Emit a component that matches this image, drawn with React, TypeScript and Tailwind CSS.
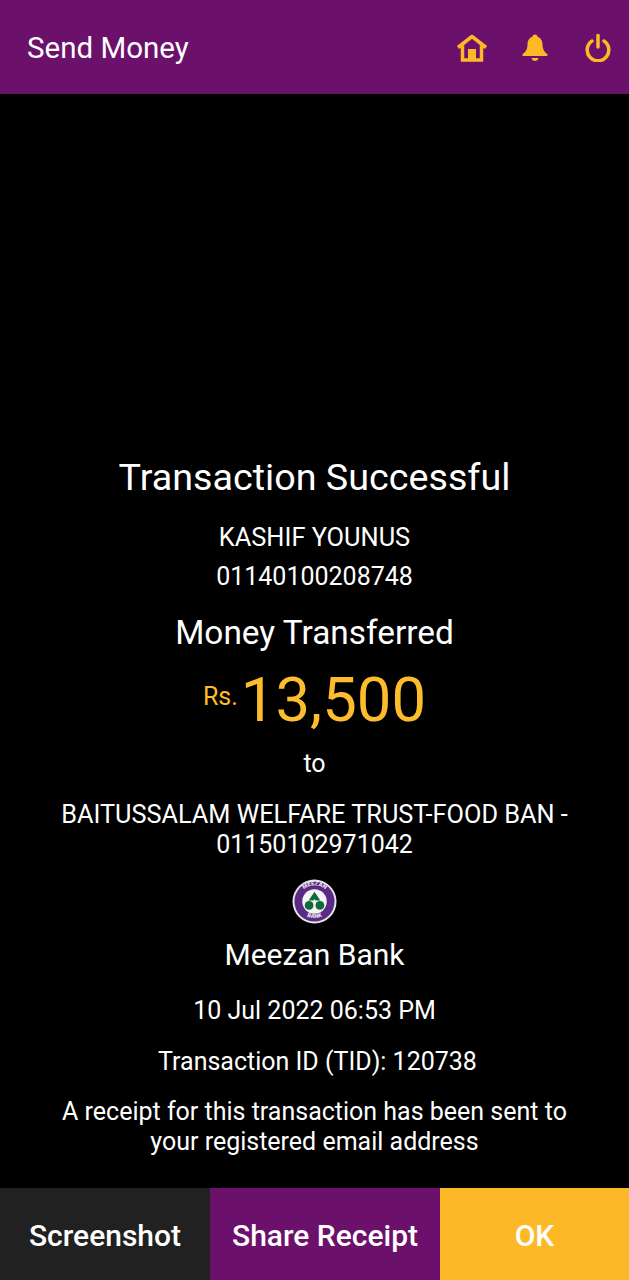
import React from "react";

function HomeIcon() {
  return (
    <svg width="32" height="28" viewBox="0 0 32 28" fill="none" stroke="#FDB827" strokeWidth="3.5">
      <path d="M2 13.500 16 2.500l14 11" strokeLinejoin="round" />
      <path d="M6.500 11.500V26H25.500V11.500" />
      <path d="M12 26V15H20V26z" fill="#FDB827" stroke="none" />
    </svg>
  );
}

function BellIcon() {
  return (
    <svg width="26" height="28" viewBox="0 0 26 28" fill="#FDB827">
      <circle cx="13" cy="3" r="2.600" />
      <path d="M13 2.500c-5 0-7.500 3.400-7.500 8 0 4.500-1.500 7-4.700 9.600-.8.700-.5 2 .7 2h23c1.200 0 1.500-1.300.7-2-3.200-2.600-4.700-5.100-4.700-9.600 0-4.600-2.500-8-7.500-8z" />
      <path d="M9.500 24h7c-.5 1.900-1.800 3-3.500 3s-3-1.100-3.500-3z" />
    </svg>
  );
}

function PowerIcon() {
  return (
    <svg width="26" height="28" viewBox="0 0 26 28" fill="none" stroke="#FDB827" strokeWidth="3.5" strokeLinecap="round">
      <path d="M13 1.500V13" />
      <path d="M7 7a10.800 10.800 0 1 0 12 0" />
    </svg>
  );
}

function MeezanLogo() {
  return (
    <svg width="45" height="45" viewBox="0 0 46 46">
      <circle cx="23" cy="23" r="22.500" fill="#e8e6ec" />
      <circle cx="23" cy="23" r="20.500" fill="#5b2a86" />
      <circle cx="23" cy="23" r="12.500" fill="#f4f4f4" />
      <path d="M23 13 29 22h-12z" fill="#0f6b3c" />
      <circle cx="17.500" cy="27" r="4.500" fill="#0f6b3c" />
      <circle cx="28.500" cy="27" r="4.500" fill="#0f6b3c" />
      <path d="M23 21v10" stroke="#f4f4f4" strokeWidth="1.500" />
      <defs>
        <path id="meezanTop" d="M6.500 23a16.500 16.500 0 0 1 33 0" />
        <path id="meezanBottom" d="M9 33a17.500 17.500 0 0 0 28 0" />
      </defs>
      <text fill="#f4f4f4" fontSize="6" fontWeight="700" fontFamily="Roboto, sans-serif">
        <textPath href="#meezanTop" startOffset="50%" textAnchor="middle">MEEZAN</textPath>
      </text>
      <text fill="#f4f4f4" fontSize="6" fontWeight="700" fontFamily="Roboto, sans-serif">
        <textPath href="#meezanBottom" startOffset="50%" textAnchor="middle">BANK</textPath>
      </text>
    </svg>
  );
}

export default function App() {
  return (
    <div className="h-[1280px] w-full flex flex-col bg-black text-white font-['Roboto',sans-serif] overflow-hidden">
      <header className="h-[94px] shrink-0 bg-[#6B106B] flex items-center pl-[27px] pr-[18px]">
        <h1 className="text-[29.500px] leading-none flex-1 pt-[3px]">Send Money</h1>
        <div className="flex items-center gap-[34px] pt-[2px]">
          <HomeIcon />
          <BellIcon />
          <div className="ml-[3px]">
            <PowerIcon />
          </div>
        </div>
      </header>

      <main className="flex-1 flex flex-col items-center justify-end text-center pb-[31px] px-4">
        <h2 className="text-[37.700px] leading-[42px]">Transaction Successful</h2>
        <p className="text-[25.400px] leading-[28px] mt-[25px]">KASHIF YOUNUS</p>
        <p className="text-[25px] leading-[28px] mt-[12px]">01140100208748</p>
        <p className="text-[33.400px] leading-[38px] mt-[23px]">Money Transferred</p>
        <div className="flex items-baseline text-[#FDBC2C] mt-[11px]">
          <span className="text-[25px] leading-none mr-[3px] relative -top-[16px]">Rs.</span>
          <span className="text-[61.600px] leading-[75px]">13,500</span>
        </div>
        <p className="text-[25px] leading-[28px] mt-[12px]">to</p>
        <p className="text-[25.300px] leading-[30px] mt-[22px]">
          BAITUSSALAM WELFARE TRUST-FOOD BAN -<br />
          <span className="text-[25px]">01150102971042</span>
        </p>
        <div className="mt-[19px]">
          <MeezanLogo />
        </div>
        <p className="text-[30px] leading-[34px] mt-[14px]">Meezan Bank</p>
        <p className="text-[25px] leading-[28px] mt-[25px]">10 Jul 2022 06:53 PM</p>
        <p className="text-[25px] leading-[28px] mt-[23px] pl-[6px]">Transaction ID (TID): 120738</p>
        <p className="text-[25px] leading-[30px] mt-[21px]">
          A receipt for this transaction has been sent to<br />your registered email address
        </p>
      </main>

      <footer className="h-[92px] shrink-0 flex text-[30px] font-medium">
        <button className="w-[210px] bg-[#212121] flex items-center justify-center pt-[3px]">Screenshot</button>
        <button className="w-[230px] bg-[#6B106B] flex items-center justify-center pt-[3px]">Share Receipt</button>
        <button className="flex-1 bg-[#FDB827] flex items-center justify-center pt-[3px]">OK</button>
      </footer>
    </div>
  );
}
